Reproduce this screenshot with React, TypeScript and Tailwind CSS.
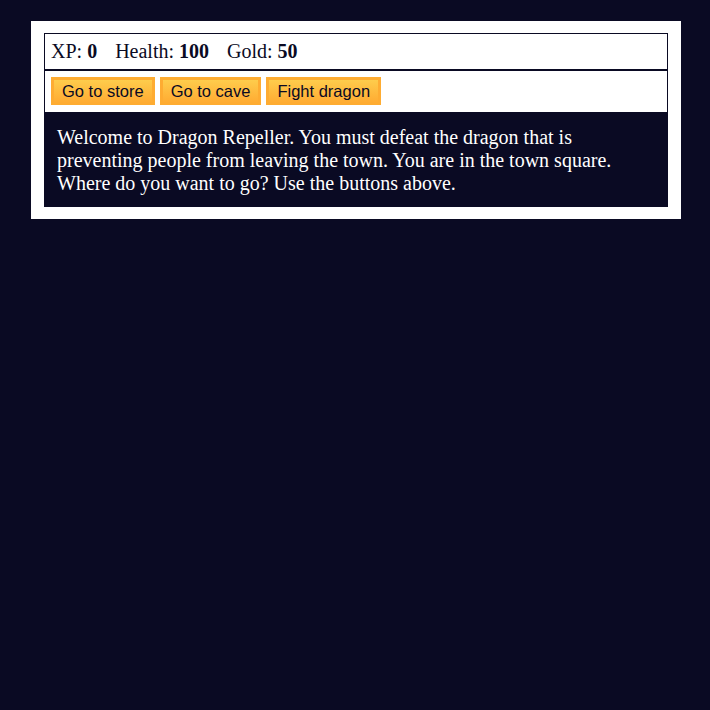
export default function App() {
  const btn =
    "inline-block align-middle h-[28px] px-[8px] text-[16.5px] leading-[20px] text-[#0a0a23] border-[3px] border-[#feac32] bg-[linear-gradient(#fecc4c,#ffac33)] cursor-pointer";
  return (
    <div className="min-h-[710px] w-full bg-[#0a0a23] pt-[21px]" style={{ fontFamily: '"Liberation Serif", "Times New Roman", serif' }}>
      <div className="ml-[31px] w-[650px] bg-white px-[13px] pt-[12px] pb-[12px]">
        <div className="border border-[#0a0a23] px-[6px] py-[6px] h-[37px] text-[20px] leading-[23px] text-[#0a0a23]">
          <span className="pr-[13px]">XP: <strong>0</strong></span>{" "}
          <span className="pr-[13px]">Health: <strong>100</strong></span>{" "}
          <span className="pr-[13px]">Gold: <strong>50</strong></span>
        </div>
        <div className="border border-[#0a0a23] px-[6px] py-[6px] flex gap-[5px] h-[43px]" style={{ fontFamily: '"Liberation Sans", Arial, sans-serif' }}>
          <button className={btn}>Go to store</button>
          <button className={btn}>Go to cave</button>
          <button className={btn}>Fight dragon</button>
        </div>
        <div className="bg-[#0a0a23] text-white px-[13px] pt-[13px] pb-[12px] text-[20px] leading-[23px]">
          Welcome to Dragon Repeller. You must defeat the dragon that is preventing people from leaving the town. You are in the town square. Where do you want to go? Use the buttons above.
        </div>
      </div>
    </div>
  );
}
